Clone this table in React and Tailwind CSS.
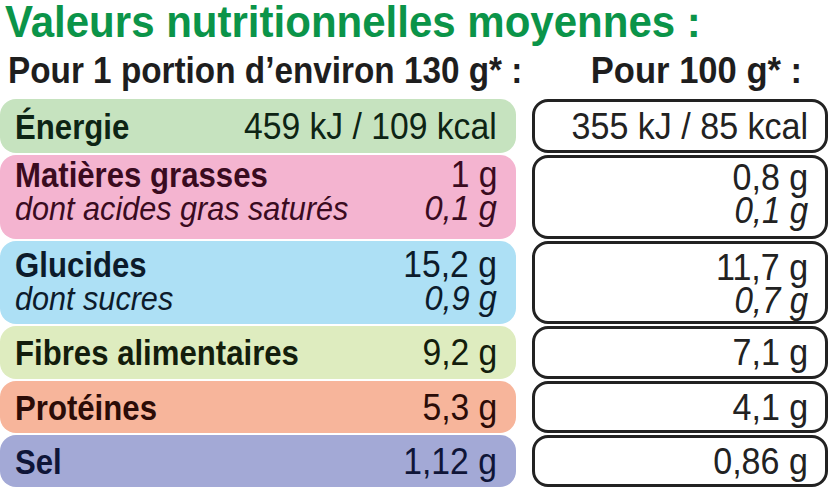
import React from "react";

const F = { fontFamily: '"Liberation Sans", Arial, sans-serif' };

const rows = [
  { label: "Énergie", v1: "459 kJ / 109 kcal", v2: "355 kJ / 85 kcal", bg: "bg-[#c6e3bf]", tc: "text-[#0d2414]", h: "h-[54px]", pad: "justify-center" },
  { label: "Matières grasses", sub: "dont acides gras saturés", v1: "1 g", s1: "0,1 g", v2: "0,8 g", s2: "0,1 g", bg: "bg-[#f4b4d0]", tc: "text-[#3a0b1f]", h: "h-[84px]", pad: "pt-[3px]" },
  { label: "Glucides", sub: "dont sucres", v1: "15,2 g", s1: "0,9 g", v2: "11,7 g", s2: "0,7 g", bg: "bg-[#ade0f5]", tc: "text-[#0c1b2b]", h: "h-[83px]", pad: "pt-[7px]" },
  { label: "Fibres alimentaires", v1: "9,2 g", v2: "7,1 g", bg: "bg-[#deecbf]", tc: "text-[#131d0c]", h: "h-[53px]", pad: "justify-center" },
  { label: "Protéines", v1: "5,3 g", v2: "4,1 g", bg: "bg-[#f7b59b]", tc: "text-[#2b0c07]", h: "h-[52px]", pad: "justify-center" },
  { label: "Sel", v1: "1,12 g", v2: "0,86 g", bg: "bg-[#a3a9d6]", tc: "text-[#0f1538]", h: "h-[52px]", pad: "justify-center" },
];

export default function App() {
  return (
    <div className="w-[832px] h-[496px] bg-white overflow-hidden" style={F}>
      <div className="h-[44px] pl-[5px] text-[44px] leading-[44px] font-bold text-[#0b9449] whitespace-nowrap">
        <span className="inline-block origin-left scale-x-[0.955]">Valeurs nutritionnelles moyennes :</span>
      </div>
      <div className="flex h-[55px] pt-[9px] text-[36px] leading-[36px] font-bold text-[#1e1e1e] whitespace-nowrap">
        <div className="w-[532px] pl-[8px]">
          <span className="inline-block origin-left scale-x-[0.925]">Pour 1 portion d’environ 130 g* :</span>
        </div>
        <div className="w-[296px] flex justify-end pr-[26px]">
          <span className="inline-block origin-right scale-x-[0.96]">Pour 100 g* :</span>
        </div>
      </div>
      <div className="flex flex-col gap-[2px]">
        {rows.map((r) => (
          <div key={r.label} className={`flex gap-[16px] ${r.h}`}>
            <div className={`w-[516px] h-full rounded-[16px] ${r.bg} ${r.tc} flex flex-col ${r.pad} pl-[15px] pr-[19px] leading-[33px] whitespace-nowrap`}>
              <div className="flex justify-between items-baseline h-[33px]">
                <span className="inline-block origin-left scale-x-[0.89] font-bold text-[35px]">{r.label}</span>
                <span className="inline-block origin-right scale-x-[0.91] text-[37px]">{r.v1}</span>
              </div>
              {r.sub && (
                <div className="flex justify-between items-baseline italic h-[33px]">
                  <span className="inline-block origin-left scale-x-[0.9] text-[34px]">{r.sub}</span>
                  <span className="inline-block origin-right scale-x-[0.93] text-[35px]">{r.s1}</span>
                </div>
              )}
            </div>
            <div className={`w-[296px] h-full rounded-[16px] border-[3px] border-[#222] text-[#222] flex flex-col ${r.pad} items-end pr-[17px] leading-[33px] whitespace-nowrap`}>
              <span className="inline-block origin-right scale-x-[0.92] text-[37px] h-[33px]">{r.v2}</span>
              {r.s2 && <span className="inline-block origin-right scale-x-[0.92] italic text-[36px] h-[33px]">{r.s2}</span>}
            </div>
          </div>
        ))}
      </div>
    </div>
  );
}
